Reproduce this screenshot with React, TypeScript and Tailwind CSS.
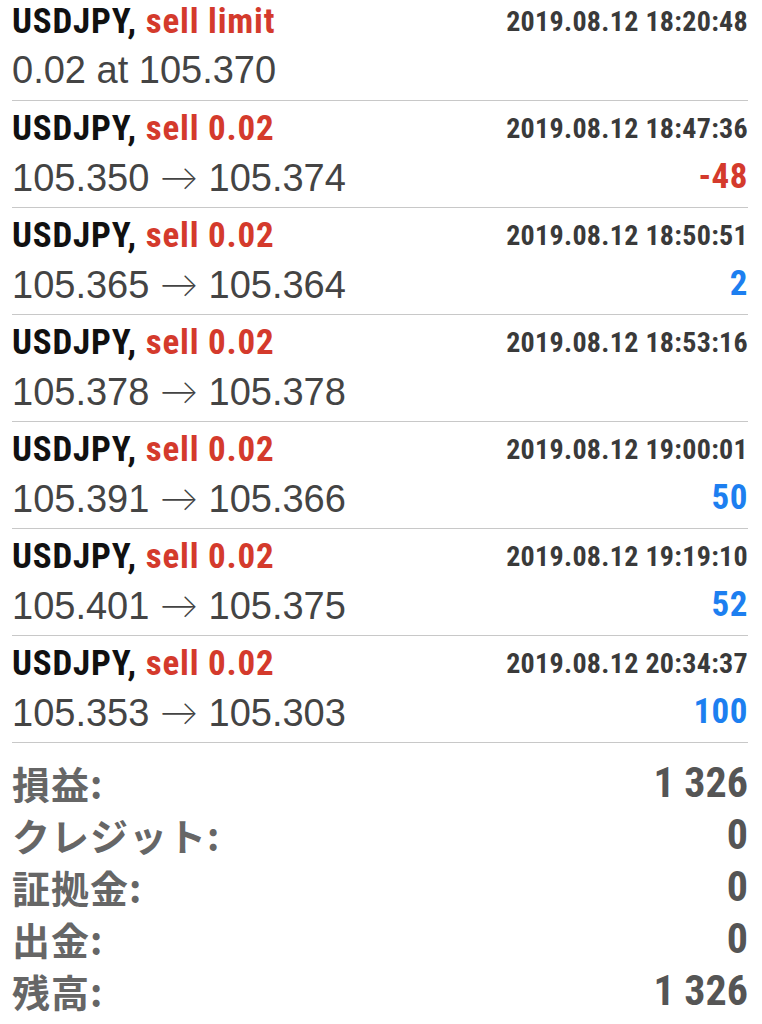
const trades = [
  { title: 'sell limit', time: '2019.08.12 18:20:48', from: '0.02 at 105.370', to: '', value: '', tone: '' },
  { title: 'sell 0.02', time: '2019.08.12 18:47:36', from: '105.350', to: '105.374', value: '-48', tone: 'red' },
  { title: 'sell 0.02', time: '2019.08.12 18:50:51', from: '105.365', to: '105.364', value: '2', tone: 'blue' },
  { title: 'sell 0.02', time: '2019.08.12 18:53:16', from: '105.378', to: '105.378', value: '', tone: '' },
  { title: 'sell 0.02', time: '2019.08.12 19:00:01', from: '105.391', to: '105.366', value: '50', tone: 'blue' },
  { title: 'sell 0.02', time: '2019.08.12 19:19:10', from: '105.401', to: '105.375', value: '52', tone: 'blue' },
  { title: 'sell 0.02', time: '2019.08.12 20:34:37', from: '105.353', to: '105.303', value: '100', tone: 'blue' },
];

const summary = [
  { label: '損益:', value: '1 326' },
  { label: 'クレジット:', value: '0' },
  { label: '証拠金:', value: '0' },
  { label: '出金:', value: '0' },
  { label: '残高:', value: '1 326' },
];

// condensed bold, close to the iOS Helvetica condensed look
const narrow = "font-['Roboto_Condensed',Roboto,sans-serif] font-bold";

export default function App() {
  return (
    <div className="w-[762px] h-[1024px] bg-white overflow-hidden pl-3 pr-[14px]">
      {trades.map((t, i) => (
        <div key={i} className={`border-b border-[#c8c8c8] pb-[4px] ${i === 0 ? '' : 'pt-[6px]'}`}>
          <div className="h-[44px] flex items-center justify-between">
            <span className={`${narrow} text-[35px] text-[#111] tracking-[0.8px]`}>
              USDJPY, <span className="text-[#d43a2c]">{t.title}</span>
            </span>
            <span className={`${narrow} text-[28px] text-[#3a3a3a] tracking-[0.3px]`}>{t.time}</span>
          </div>
          <div className="h-[52px] flex items-center justify-between">
            <span className="font-['Liberation_Sans',sans-serif] text-[38px] text-[#444]">
              {t.from}
              {t.to && (
                <>
                  {' '}
                  <span className="font-['Lato',sans-serif] font-light">→</span> {t.to}
                </>
              )}
            </span>
            <span
              className={`${narrow} text-[35px] tracking-[0.5px] ${t.tone === 'red' ? 'text-[#d43a2c]' : 'text-[#1d7ff0]'}`}
            >
              {t.value}
            </span>
          </div>
        </div>
      ))}
      <div className="pt-[13px]">
        {summary.map((s) => (
          <div key={s.label} className="h-[52px] flex items-center justify-between">
            <span className="font-['Noto_Sans_CJK_JP',sans-serif] font-bold text-[38px] tracking-[1px] text-[#666]">
              {s.label}
            </span>
            <span className={`${narrow} text-[42px] text-[#555]`}>{s.value}</span>
          </div>
        ))}
      </div>
    </div>
  );
}
